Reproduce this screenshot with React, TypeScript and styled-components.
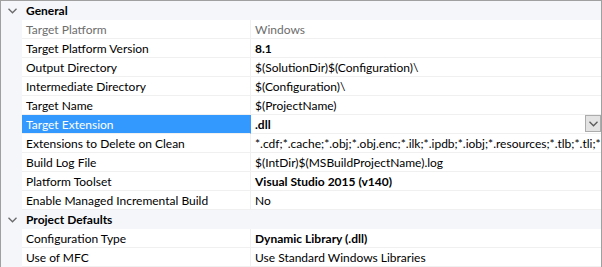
import React from 'react';
import styled, { createGlobalStyle } from 'styled-components';

const GlobalStyle = createGlobalStyle`
    html, body {
        margin: 0;
        padding: 0;
        background: #ffffff;
    }
    body {
        font-family: Lato, 'Noto Sans', 'Liberation Sans', sans-serif;
        font-size: 12px;
    }
`;

type Property = {
    name: string;
    value: string;
    bold?: boolean;
    disabled?: boolean;
    selected?: boolean;
};

type Category = {
    title: string;
    items: Property[];
};

const categories: Category[] = [
    {
        title: 'General',
        items: [
            { name: 'Target Platform', value: 'Windows', disabled: true },
            { name: 'Target Platform Version', value: '8.1', bold: true },
            { name: 'Output Directory', value: '$(SolutionDir)$(Configuration)\\' },
            { name: 'Intermediate Directory', value: '$(Configuration)\\' },
            { name: 'Target Name', value: '$(ProjectName)' },
            { name: 'Target Extension', value: '.dll', bold: true, selected: true },
            {
                name: 'Extensions to Delete on Clean',
                value: '*.cdf;*.cache;*.obj;*.obj.enc;*.ilk;*.ipdb;*.iobj;*.resources;*.tlb;*.tli;*.tlh;*.tmp;*.rsp;*.pgc;*.pgd;*.meta;*.tlog;*.manifest;*.res;*.pch;*.exp;*.idb;*.rep;*.xdc;*.pdb;*_manifest.rc;*.bsc;*.sbr;*.xml;*.metagen;*.bi',
            },
            { name: 'Build Log File', value: '$(IntDir)$(MSBuildProjectName).log' },
            { name: 'Platform Toolset', value: 'Visual Studio 2015 (v140)', bold: true },
            { name: 'Enable Managed Incremental Build', value: 'No' },
        ],
    },
    {
        title: 'Project Defaults',
        items: [
            { name: 'Configuration Type', value: 'Dynamic Library (.dll)', bold: true },
            { name: 'Use of MFC', value: 'Use Standard Windows Libraries' },
        ],
    },
];

const ChevronDown = ({ color = '#555' }: { color?: string }) => (
    <svg width="9" height="6" viewBox="0 0 9 6">
        <path d="M0.5 0.8 L4.5 4.8 L8.5 0.8" fill="none" stroke={color} strokeWidth="1.3" />
    </svg>
);

const App = () => {
    return (
        <>
            <GlobalStyle />
            <Grid>
                {categories.map((category) => (
                    <React.Fragment key={category.title}>
                        <CategoryRow>
                            <Gutter>
                                <ChevronDown color="#6a6a6a" />
                            </Gutter>
                            <CategoryTitle>{category.title}</CategoryTitle>
                        </CategoryRow>
                        {category.items.map((item) => (
                            <PropertyRow key={item.name}>
                                <Gutter />
                                <NameCell $selected={item.selected} $disabled={item.disabled}>
                                    {item.name}
                                </NameCell>
                                <ValueCell $bold={item.bold} $disabled={item.disabled} $selected={item.selected}>
                                    <ValueText>{item.value}</ValueText>
                                    {item.selected && (
                                        <DropButton>
                                            <ChevronDown color="#5a5a5a" />
                                        </DropButton>
                                    )}
                                </ValueCell>
                            </PropertyRow>
                        ))}
                    </React.Fragment>
                ))}
            </Grid>
        </>
    );
};

export default App;

const Grid = styled.div`
    width: 602px;
    height: 267px;
    box-sizing: border-box;
    border: 1px solid #a0a0a0;
    border-bottom: none;
    overflow: hidden;
    background: #ffffff;
    color: #000000;
`;

const RowBase = styled.div`
    display: grid;
    grid-template-columns: 21px 229px 1fr;
    height: 19px;
    box-sizing: border-box;
`;

const CategoryRow = styled(RowBase)`
    background: #f4f6fa;
    grid-template-columns: 21px 1fr;
`;

const PropertyRow = styled(RowBase)``;

const Gutter = styled.div`
    background: #f4f6fa;
    display: flex;
    align-items: center;
    justify-content: center;
    padding-left: 2px;
`;

const CategoryTitle = styled.div`
    font-weight: bold;
    padding: 1px 0 0 4px;
    line-height: 18px;
    white-space: nowrap;
`;

const NameCell = styled.div<{ $selected?: boolean; $disabled?: boolean }>`
    padding: 1px 0 0 4px;
    line-height: 17px;
    white-space: nowrap;
    overflow: hidden;
    border-bottom: 1px solid #f0f0f0;
    border-right: 1px solid #f0f0f0;
    background: ${(p) => (p.$selected ? '#3399ff' : '#ffffff')};
    color: ${(p) => (p.$selected ? '#ffffff' : p.$disabled ? '#6d6d6d' : '#000000')};
`;

const ValueCell = styled.div<{ $bold?: boolean; $disabled?: boolean; $selected?: boolean }>`
    display: flex;
    align-items: stretch;
    min-width: 0;
    padding-left: 4px;
    border-bottom: 1px solid #f0f0f0;
    border-left: ${(p) => (p.$selected ? '1px solid #3399ff' : 'none')};
    margin-left: ${(p) => (p.$selected ? '-1px' : '0')};
    font-weight: ${(p) => (p.$bold ? 'bold' : 'normal')};
    color: ${(p) => (p.$disabled ? '#6d6d6d' : '#000000')};
`;

const ValueText = styled.div`
    flex: 1;
    min-width: 0;
    padding-top: 1px;
    line-height: 17px;
    white-space: nowrap;
    overflow: hidden;
`;

const DropButton = styled.div`
    width: 16px;
    height: 17px;
    margin-top: 0;
    box-sizing: border-box;
    background: #e3e3e3;
    border: 1px solid #acacac;
    display: flex;
    align-items: center;
    justify-content: center;
`;
